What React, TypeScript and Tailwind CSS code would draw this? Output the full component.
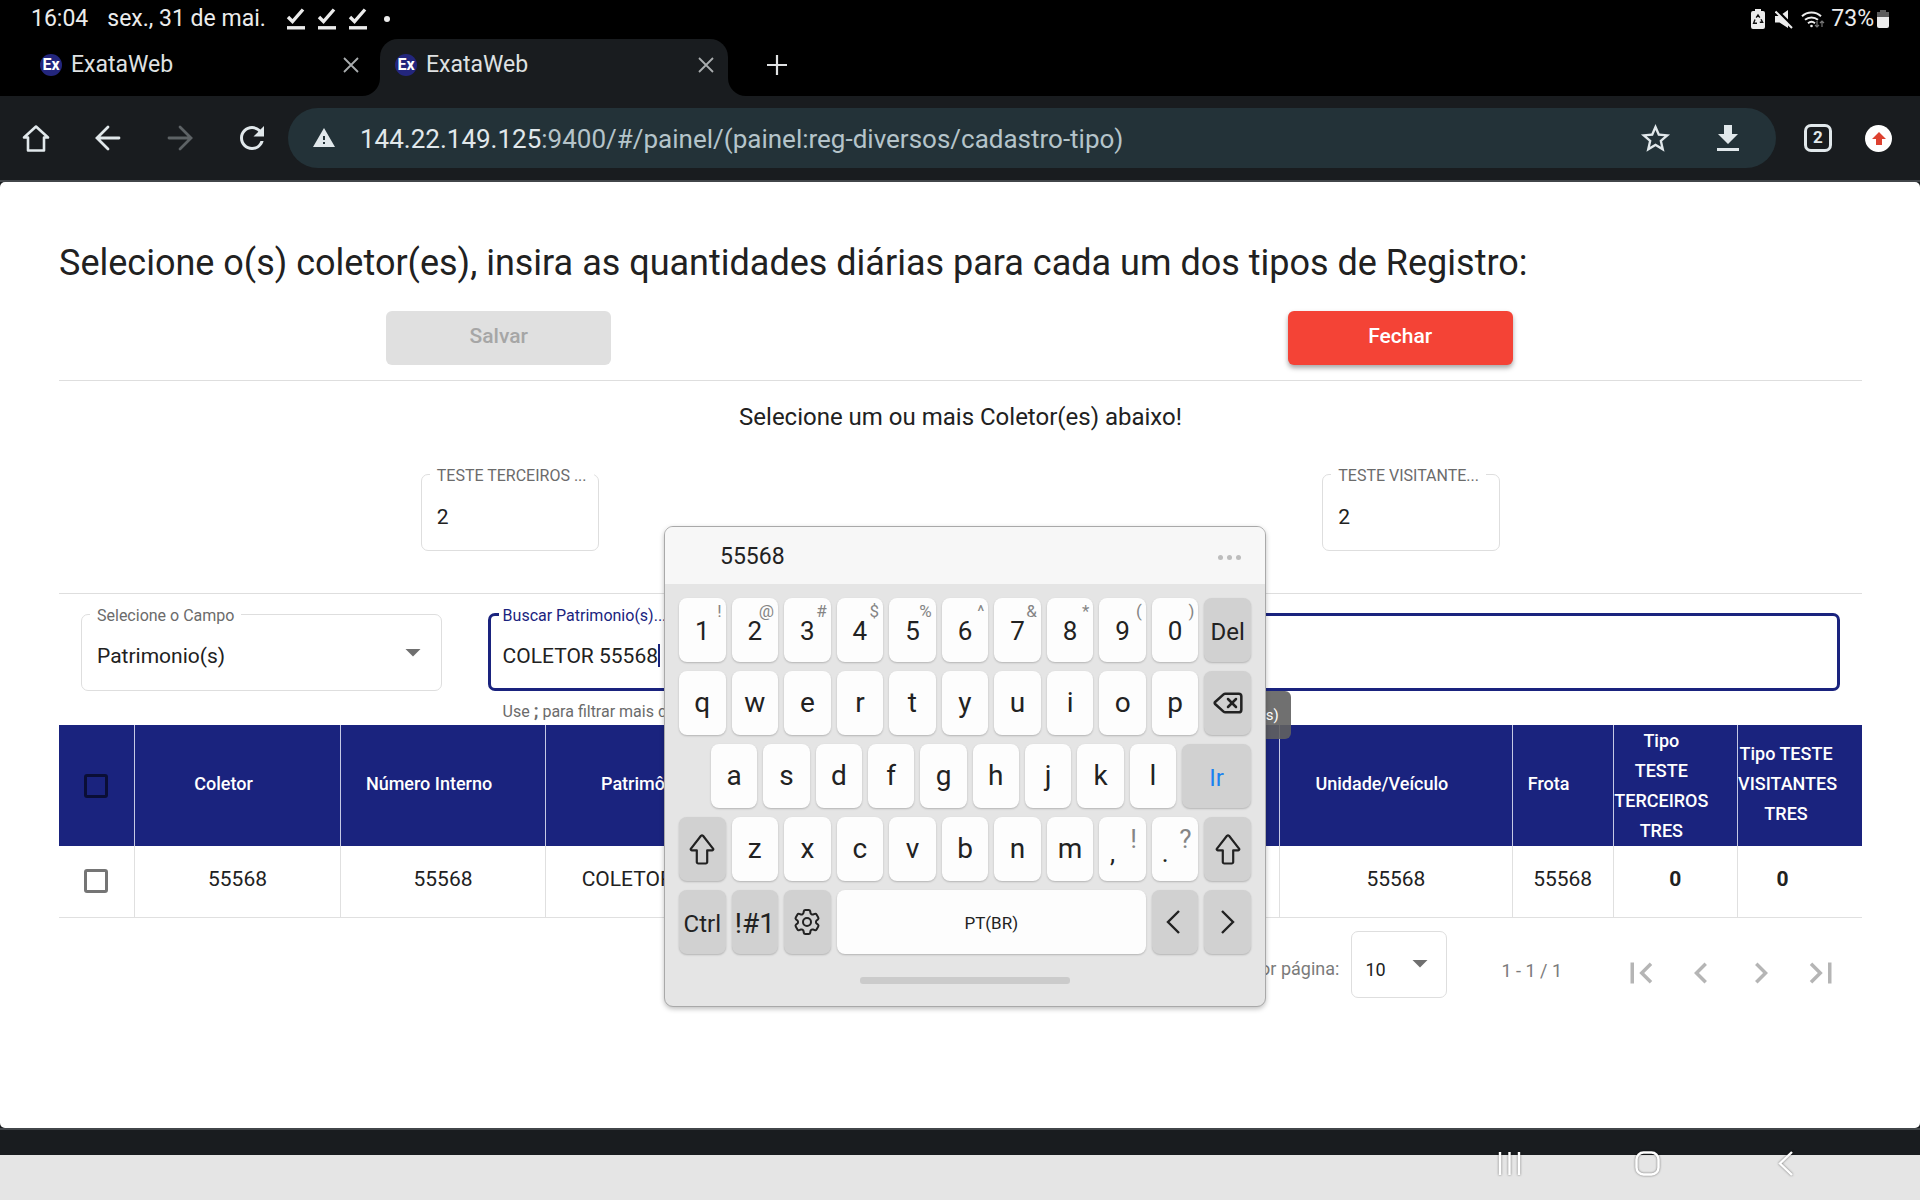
import { type ReactNode } from "react";
import {
  MdArrowDropDown,
  MdChevronLeft,
  MdChevronRight,
  MdFirstPage,
  MdLastPage,
  MdRefresh,
  MdStarBorder,
  MdWarning,
} from "react-icons/md";
import { HiOutlineCog6Tooth } from "react-icons/hi2";
import { Delete } from "lucide-react";

function DoneIcon() {
  return (
    <svg viewBox="0 0 20 22" className="h-[22px] w-5" fill="none" stroke="currentColor">
      <path d="M2 9 L6.500 13.500 L17 1.500" strokeWidth="3.400" />
      <path d="M1 19.800 H19" strokeWidth="3.400" />
    </svg>
  );
}

function StatusBar() {
  return (
    <div className="flex h-[38px] items-center justify-between pr-[31px] pl-[31px] text-[23px] text-[#ececec]">
      <div className="flex items-center">
        <span>16:04</span>
        <span className="ml-[19px]">sex., 31 de mai.</span>
        <div className="ml-5 flex gap-[11px]">
          <DoneIcon />
          <DoneIcon />
          <DoneIcon />
        </div>
        <span className="ml-4 size-[6px] rounded-full bg-[#ececec]" />
      </div>
      <div className="flex items-center">
        <svg viewBox="0 0 14 20" className="h-5 w-[14px]" aria-hidden="true">
          <path d="M4 0h6v2h2a2 2 0 0 1 2 2v14a2 2 0 0 1-2 2H2a2 2 0 0 1-2-2V4a2 2 0 0 1 2-2h2z" fill="#ececec" />
          <path d="M5.200 8.600 7 6l1.800 2.600M10 10.200l1.600 3.100H8.800M6 14.200H2.600L4 10.600" fill="none" stroke="#111" strokeWidth="1.400" />
        </svg>
        <svg viewBox="0 0 18 19" className="ml-[10px] h-[19px] w-[18px]" aria-hidden="true">
          <path d="M0 6h4.500L13 0v18L4.500 12.500H0z" fill="#ececec" />
          <path d="M1.500 0 18 16.500" stroke="#000" strokeWidth="3" />
          <path d="M.500 1.500 17 18" stroke="#ececec" strokeWidth="2" />
        </svg>
        <svg viewBox="0 0 24 19" className="ml-[8px] h-[19px] w-6" fill="none" stroke="#ececec" strokeWidth="2" aria-hidden="true">
          <path d="M1 6.200a14 14 0 0 1 19 0M4 9.800a10 10 0 0 1 13 0M7 13.200a5.600 5.600 0 0 1 7 0" />
          <circle cx="10.500" cy="16" r="1.300" fill="#ececec" stroke="none" />
          <path d="M16 11v6m-2-2 2 2 2-2M21 17v-6m-2 2 2-2 2 2" stroke="#777" strokeWidth="1.200" />
        </svg>
        <span className="ml-[6px]">73%</span>
        <svg viewBox="0 0 12 20" className="ml-[3px] h-5 w-3" aria-hidden="true">
          <path d="M3 1h6v2h3v6H0V3h3z" fill="#5c5c5c" />
          <path d="M0 8h12v9a2 2 0 0 1-2 2H2a2 2 0 0 1-2-2z" fill="#ececec" />
        </svg>
      </div>
    </div>
  );
}

function CloseIcon() {
  return (
    <svg viewBox="0 0 16 16" className="size-4" fill="none" stroke="#a9acae" strokeWidth="1.800">
      <path d="M1 1 15 15M15 1 1 15" />
    </svg>
  );
}

function Favicon() {
  return (
    <span className="flex size-[22px] items-center justify-center rounded-full bg-[#23267d] text-[16px] font-bold text-white">
      Ex
    </span>
  );
}

function Tab({ active = false }: { active?: boolean }) {
  return (
    <div
      className={
        active
          ? "relative flex w-[348px] items-center rounded-t-[18px] bg-[#191c1f] pr-[14px] pb-[5px] pl-[15px]"
          : "flex w-[380px] items-center pr-[21px] pb-[5px] pl-10"
      }
    >
      {active && (
        <>
          <svg viewBox="0 0 18 18" className="absolute bottom-0 -left-[18px] size-[18px]" aria-hidden="true">
            <path d="M18 0v18H0A18 18 0 0 0 18 0z" fill="#191c1f" />
          </svg>
          <svg viewBox="0 0 18 18" className="absolute -right-[18px] bottom-0 size-[18px]" aria-hidden="true">
            <path d="M0 0v18h18A18 18 0 0 1 0 0z" fill="#191c1f" />
          </svg>
        </>
      )}
      <Favicon />
      <span className="ml-[9px] flex-1 text-[23px] text-[#dfe1e2]">ExataWeb</span>
      <button type="button" aria-label="Fechar guia">
        <CloseIcon />
      </button>
    </div>
  );
}

function ToolButton({ label, children }: { label: string; children: ReactNode }) {
  return (
    <button type="button" aria-label={label} className="flex w-[72px] items-center justify-center">
      {children}
    </button>
  );
}

function Browser() {
  return (
    <header className="bg-black">
      <StatusBar />
      <div className="flex h-[58px] pt-px">
        <Tab />
        <Tab active />
        <button type="button" aria-label="Nova guia" className="ml-[39px] flex items-center pb-[5px]">
          <svg viewBox="0 0 20 20" className="size-5" stroke="#dfe1e2" strokeWidth="2.200">
            <path d="M10 0v20M0 10h20" />
          </svg>
        </button>
      </div>
      <div className="flex h-[86px] items-center border-b-2 border-[#42464a] bg-[#191c1f] text-[#e1e8eb]">
        <ToolButton label="Início">
          <svg viewBox="0 0 28 28" className="size-7" fill="none" stroke="currentColor" strokeWidth="2.600" strokeLinejoin="round">
            <path d="M14 2.500 26 13.500H22V26.500H6V13.500H2Z" />
          </svg>
        </ToolButton>
        <ToolButton label="Voltar">
          <svg viewBox="0 0 26 26" className="size-[26px]" fill="none" stroke="currentColor" strokeWidth="2.800" strokeLinecap="round">
            <path d="M24 13H3M13 2 2 13l11 11" />
          </svg>
        </ToolButton>
        <ToolButton label="Avançar">
          <svg viewBox="0 0 26 26" className="size-[26px] text-[#5d6265]" fill="none" stroke="currentColor" strokeWidth="2.800" strokeLinecap="round">
            <path d="M2 13h21M13 2l11 11-11 11" />
          </svg>
        </ToolButton>
        <ToolButton label="Recarregar">
          <MdRefresh className="size-9" />
        </ToolButton>
        <div className="flex h-[60px] flex-1 items-center rounded-full bg-[#233238] pr-[29px] pl-6">
          <MdWarning className="size-6" />
          <p className="ml-6 flex-1 pt-[2px] text-[26px] text-[#b5c4ca]">
            <span className="text-[#e1e8eb]">144.22.149.125</span>
            :9400/#/painel/(painel:reg-diversos/cadastro-tipo)
          </p>
          <button type="button" aria-label="Favoritar">
            <MdStarBorder className="size-[35px]" />
          </button>
          <button type="button" aria-label="Baixar" className="ml-[36px]">
            <svg viewBox="0 0 22 26" className="mr-[8px] ml-[8px] h-[26px] w-[22px]" fill="currentColor">
              <path d="M7 0h8v9h6L11 19 1 9h6zM0 23h22v3H0z" />
            </svg>
          </button>
        </div>
        <button
          type="button"
          aria-label="2 guias"
          className="ml-7 flex size-7 items-center justify-center rounded-[7px] border-[3px] border-current text-[17px] font-bold"
        >
          2
        </button>
        <button
          type="button"
          aria-label="Atualizar"
          className="mr-[28px] ml-[33px] flex size-[27px] items-center justify-center rounded-full bg-white"
        >
          <svg viewBox="0 0 14 13" className="h-[13px] w-[14px]" fill="#dd4130">
            <path d="M7 0l7 7h-4v6H4V7H0z" />
          </svg>
        </button>
      </div>
    </header>
  );
}

const legendText = "ml-2 h-5 text-[16px] leading-[23px]";

function CountField({ id, label }: { id: string; label: string }) {
  return (
    <fieldset className="h-[87px] w-[178px] rounded-[7px] border border-[#dedede]">
      <legend className={`${legendText} px-[7px] text-[#6b6b6b]`}>
        <label htmlFor={id}>{label}</label>
      </legend>
      <input id={id} defaultValue="2" className="h-[66px] w-full px-[15px] text-[21px] text-[#212121] outline-none" />
    </fieldset>
  );
}

function Filters() {
  return (
    <div className="flex h-[131px] gap-[46px] px-[22px] pt-[10px]">
      <fieldset className="relative h-[87px] w-[20.5%] rounded-[7px] border border-[#dedede]">
        <legend className={`${legendText} px-[7px] text-[#6b6b6b]`}>
          <label htmlFor="campo">Selecione o Campo</label>
        </legend>
        <select id="campo" className="h-[66px] w-full appearance-none px-[15px] text-[21px] text-[#212121] outline-none">
          <option>Patrimonio(s)</option>
        </select>
        <MdArrowDropDown className="pointer-events-none absolute top-[10px] right-[10px] size-[36px] text-[#6f6f6f]" />
      </fieldset>
      <div className="relative flex-1">
        <fieldset className="h-[87px] rounded-[7px] border-[3px] border-[#1a237e]">
          <legend className={`${legendText} px-1 text-[#1a237e]`}>
            <label htmlFor="busca">Buscar Patrimonio(s)...</label>
          </legend>
          <div className="relative">
            <input
              id="busca"
              defaultValue="COLETOR 55568"
              className="h-[64px] w-full px-3 text-[21px] text-[#212121] outline-none"
            />
            <span className="absolute top-[20px] left-[167px] h-[23px] w-[2px] bg-[#1a237e]" />
          </div>
        </fieldset>
        <p className="mt-2 pl-[15px] text-[16px] leading-[24px] text-[#6b6b6b]">
          Use <b className="text-[18px]">;</b> para filtrar mais de
        </p>
        <div
          role="tooltip"
          className="absolute top-[87px] left-1/2 flex h-12 w-[254px] -translate-x-1/2 items-center justify-end rounded-[6px] bg-[#616161]/90 px-3 text-[15px] text-white"
        >
          Patrimonio(s)
        </div>
      </div>
    </div>
  );
}

const headCell = "border-r border-[#c5c8e4] p-0 pr-[28px] pb-[4px] text-center leading-[30px] font-medium";
const bodyCell = "border-r border-[#e0e0e0] p-0 pb-[3px] text-center";
const box = "block size-6 appearance-none rounded-[3px] border-[3px]";

function CollectorTable() {
  return (
    <table className="w-full table-fixed border-collapse">
      <colgroup>
        <col className="w-[4.2%]" />
        <col className="w-[11.4%]" />
        <col className="w-[11.4%]" />
        <col className="w-[12.6%]" />
        <col className="w-[28.1%]" />
        <col className="w-[12.9%]" />
        <col className="w-[5.6%]" />
        <col className="w-[6.9%]" />
        <col />
      </colgroup>
      <thead className="bg-[#1a237e] text-[18px] text-white">
        <tr className="h-[121px]">
          <th className="border-r border-[#c5c8e4] p-0 pl-[25px]">
            <input type="checkbox" aria-label="Selecionar todos" className={`${box} border-[#0a0e36]`} />
          </th>
          <th className={headCell}>Coletor</th>
          <th className={headCell}>Número Interno</th>
          <th className={headCell}>Patrimônio</th>
          <th className={headCell} />
          <th className={headCell}>Unidade/Veículo</th>
          <th className={headCell}>Frota</th>
          <th className="border-r border-[#c5c8e4] p-0 pr-[28px] text-center leading-[30px] font-medium">
            Tipo
            <br />
            TESTE
            <br />
            TERCEIROS
            <br />
            TRES
          </th>
          <th className="p-0 pr-[28px] pb-[4px] text-center leading-[30px] font-medium">Tipo TESTE VISITANTES TRES</th>
        </tr>
      </thead>
      <tbody className="text-[21px] text-[#212121]">
        <tr className="h-[71px] border-b border-[#e0e0e0]">
          <td className="border-r border-[#e0e0e0] p-0 pl-[25px]">
            <input type="checkbox" aria-label="Selecionar 55568" className={`${box} border-[#757575]`} />
          </td>
          <td className={bodyCell}>55568</td>
          <td className={bodyCell}>55568</td>
          <td className={bodyCell}>COLETOR 55568</td>
          <td className={bodyCell} />
          <td className={bodyCell}>55568</td>
          <td className={bodyCell}>55568</td>
          <td className={`${bodyCell} font-bold`}>0</td>
          <td className="p-0 pr-[35px] pb-[3px] text-center font-bold">0</td>
        </tr>
      </tbody>
    </table>
  );
}

function Paginator() {
  return (
    <div className="mt-[13px] flex h-[67px] items-center justify-end pr-[11px] text-[18px] text-[#7b7b7b]">
      <label htmlFor="porPagina" className="pt-2">
        Itens por página:
      </label>
      <div className="relative ml-3 h-full w-24">
        <select
          id="porPagina"
          className="h-full w-full appearance-none rounded-[7px] border border-[#dedede] pt-[10px] pl-[13px] text-[18px] text-[#212121]"
        >
          <option>10</option>
        </select>
        <MdArrowDropDown className="pointer-events-none absolute top-[14px] right-[9px] size-9 text-[#6f6f6f]" />
      </div>
      <span className="mr-[49px] ml-[54px] pt-3">1 - 1 / 1</span>
      <div className="flex pt-[18px] text-[#b5b5b5]">
        <button type="button" aria-label="Primeira página" className="flex w-[60px] justify-center">
          <MdFirstPage className="size-[42px]" />
        </button>
        <button type="button" aria-label="Página anterior" className="flex w-[60px] justify-center">
          <MdChevronLeft className="size-[42px]" />
        </button>
        <button type="button" aria-label="Próxima página" className="flex w-[60px] justify-center">
          <MdChevronRight className="size-[42px]" />
        </button>
        <button type="button" aria-label="Última página" className="flex w-[60px] justify-center">
          <MdLastPage className="size-[42px]" />
        </button>
      </div>
    </div>
  );
}

const keyBase = "relative flex items-center justify-center rounded-[8px] shadow-[0_1px_2px_rgba(0,0,0,0.22)]";
const lightKey = `${keyBase} bg-[#fdfdfd]`;
const darkKey = `${keyBase} bg-[#d1d1d1]`;

const digits: [string, string][] = [
  ["1", "!"],
  ["2", "@"],
  ["3", "#"],
  ["4", "$"],
  ["5", "%"],
  ["6", "^"],
  ["7", "&"],
  ["8", "*"],
  ["9", "("],
  ["0", ")"],
];

function Letters({ keys }: { keys: string }) {
  return (
    <>
      {keys.split("").map((k) => (
        <button type="button" key={k} className={`${lightKey} text-[28px]`}>
          {k}
        </button>
      ))}
    </>
  );
}

function ShiftIcon() {
  return (
    <svg viewBox="0 0 26 31" className="h-[31px] w-[26px]" fill="none" stroke="currentColor" strokeWidth="2.200" strokeLinejoin="round">
      <path d="M12 1.800a1.500 1.500 0 0 1 2 0L24 14.600a1 1 0 0 1-.7 1.700H18.200V28a1.500 1.500 0 0 1-1.500 1.500H9.300A1.500 1.500 0 0 1 7.800 28V16.300H2.700A1 1 0 0 1 2 14.600Z" />
    </svg>
  );
}

function Keyboard() {
  const row = "grid h-16 grid-cols-11 gap-[6px]";
  return (
    <section
      aria-label="Teclado"
      className="absolute top-[526px] left-[664px] w-[602px] overflow-hidden rounded-[9px] border border-[#a9a9a9] bg-[#e5e5e5] text-[#222] shadow-[0_2px_5px_rgba(0,0,0,0.25)]"
    >
      <div className="flex h-[57px] items-center justify-between bg-[#f7f7f7] pt-[3px] pr-6 pl-[55px]">
        <button type="button" className="text-[23px]">
          55568
        </button>
        <button type="button" aria-label="Mais" className="flex gap-[4px]">
          <span className="size-[5px] rounded-full bg-[#bdbdbd]" />
          <span className="size-[5px] rounded-full bg-[#bdbdbd]" />
          <span className="size-[5px] rounded-full bg-[#bdbdbd]" />
        </button>
      </div>
      <div className="grid gap-[9px] px-[14px] pt-[14px]">
        <div className={row}>
          {digits.map(([k, alt]) => (
            <button type="button" key={k} className={`${lightKey} pt-[3px] text-[26px]`}>
              {k}
              <span className="absolute top-[3px] right-[4px] text-[17px] leading-5 text-[#858585]">{alt}</span>
            </button>
          ))}
          <button type="button" className={`${darkKey} pt-[3px] text-[24px]`}>
            Del
          </button>
        </div>
        <div className={row}>
          <Letters keys="qwertyuiop" />
          <button type="button" aria-label="Apagar" className={darkKey}>
            <Delete className="size-[32px]" strokeWidth={1.9} />
          </button>
        </div>
        <div className="grid h-16 grid-cols-[repeat(9,1fr)_69px] gap-[6px] pl-8">
          <Letters keys="asdfghjkl" />
          <button type="button" className={`${darkKey} pt-[3px] text-[24px] text-[#1a82f0]`}>
            Ir
          </button>
        </div>
        <div className={row}>
          <button type="button" aria-label="Maiúsculas" className={darkKey}>
            <ShiftIcon />
          </button>
          <Letters keys="zxcvbnm" />
          <button type="button" className={`${lightKey} pt-[9px] pr-5 text-[26px]`}>
            ,<span className="absolute top-[5px] right-[9px] text-[26px] leading-[34px] text-[#858585]">!</span>
          </button>
          <button type="button" className={`${lightKey} pt-[9px] pr-5 text-[26px]`}>
            .<span className="absolute top-[5px] right-[7px] text-[26px] leading-[34px] text-[#858585]">?</span>
          </button>
          <button type="button" aria-label="Maiúsculas" className={darkKey}>
            <ShiftIcon />
          </button>
        </div>
        <div className={row}>
          <button type="button" className={`${darkKey} pt-[4px] text-[24px]`}>
            Ctrl
          </button>
          <button type="button" className={`${darkKey} pt-[3px] text-[28px]`}>
            !#1
          </button>
          <button type="button" aria-label="Configurações" className={darkKey}>
            <HiOutlineCog6Tooth className="size-[32px]" />
          </button>
          <button type="button" className={`${lightKey} col-span-6 pt-[3px] text-[17px]`}>
            PT(BR)
          </button>
          <button type="button" aria-label="Esquerda" className={`${darkKey} pr-1`}>
            <svg viewBox="0 0 14 24" className="h-6 w-[14px]" fill="none" stroke="currentColor" strokeWidth="2.400">
              <path d="M13 1 2 12l11 11" />
            </svg>
          </button>
          <button type="button" aria-label="Direita" className={darkKey}>
            <svg viewBox="0 0 14 24" className="h-6 w-[14px]" fill="none" stroke="currentColor" strokeWidth="2.400">
              <path d="M1 1l11 11L1 23" />
            </svg>
          </button>
        </div>
      </div>
      <div className="mx-auto mt-[23px] mb-[22px] h-[7px] w-[210px] rounded-[3px] bg-[#cbcbcb]" />
    </section>
  );
}

function NavBar() {
  return (
    <footer className="bg-[#191c1f]">
      <div className="h-[27px] border-t-2 border-[#42464a]" />
      <div className="h-[45px] bg-[#e5e5e5]">
        <nav className="relative -top-1 flex justify-end gap-[112px] pr-[121px] text-white drop-shadow-[0_0_1px_rgba(0,0,0,0.5)]">
          <button type="button" aria-label="Recentes">
            <svg viewBox="0 0 26 26" className="size-[26px]" stroke="currentColor" strokeWidth="2.400">
              <path d="M3 1v23M12.500 1v23M22 1v23" />
            </svg>
          </button>
          <button type="button" aria-label="Tela inicial">
            <svg viewBox="0 0 26 26" className="size-[26px]" fill="none" stroke="currentColor" strokeWidth="2.400">
              <rect x="1.500" y="1.500" width="22" height="22" rx="7" />
            </svg>
          </button>
          <button type="button" aria-label="Voltar">
            <svg viewBox="0 0 26 26" className="size-[26px]" fill="none" stroke="currentColor" strokeWidth="2.400">
              <path d="M19 1 7 12.500 19 24" />
            </svg>
          </button>
        </nav>
      </div>
    </footer>
  );
}

export default function App() {
  return (
    <div className="relative flex min-h-screen flex-col bg-[#191c1f] font-[Roboto,sans-serif]">
      <Browser />
      <main className="flex-1 rounded-[5px] bg-white pt-[57px] pr-[58px] pl-[59px] text-[#212121]">
        <h1 className="text-[36px] leading-[48px]">
          Selecione o(s) coletor(es), insira as quantidades diárias para cada um dos tipos de Registro:
        </h1>
        <div className="mt-[24px] grid grid-cols-2 pb-[15px] text-[21px] font-medium">
          <div className="pr-[22px]">
            <button
              type="button"
              disabled
              className="mx-auto block h-[54px] w-[225px] rounded-[6px] bg-[#e0e0e0] pb-[2px] text-[#a6a6a6]"
            >
              Salvar
            </button>
          </div>
          <div className="pr-[22px]">
            <button
              type="button"
              className="mx-auto block h-[54px] w-[225px] rounded-[6px] bg-[#f44336] pb-[2px] text-white shadow-[0_3px_5px_rgba(0,0,0,0.35)]"
            >
              Fechar
            </button>
          </div>
        </div>
        <hr className="border-[#dedede]" />
        <p className="mt-[20px] text-center text-[24px] leading-8">Selecione um ou mais Coletor(es) abaixo!</p>
        <div className="mt-[31px] mb-[42px] grid grid-cols-2 justify-items-center">
          <CountField id="terceiros" label="TESTE TERCEIROS ..." />
          <CountField id="visitantes" label="TESTE VISITANTE..." />
        </div>
        <hr className="border-[#dedede]" />
        <Filters />
        <CollectorTable />
        <Paginator />
      </main>
      <NavBar />
      <Keyboard />
    </div>
  );
}
